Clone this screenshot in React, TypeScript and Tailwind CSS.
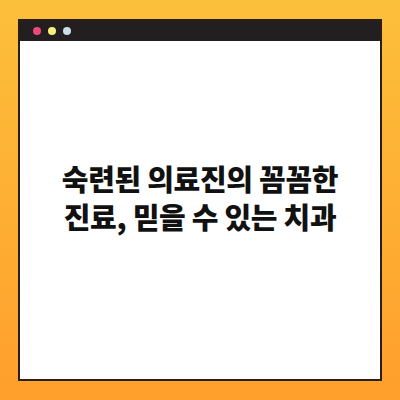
export default function App() {
  return (
    <div className="w-[400px] h-[400px] bg-gradient-to-b from-[#fcbf3b] to-[#ff9f2c] pt-[19px] pl-[18px]">
      <div className="w-[364px] h-[362px] border-2 border-[#2a1e1a] bg-white flex flex-col">
        <div className="h-[20px] bg-[#231f20] flex items-center gap-[7px] pl-[13px]">
          <span className="w-[8px] h-[8px] rounded-full bg-[#ea4a7c]" />
          <span className="w-[8px] h-[8px] rounded-full bg-[#f4f27c]" />
          <span className="w-[8px] h-[8px] rounded-full bg-[#c9e1e0]" />
        </div>
        <div className="flex-1 flex items-center justify-center pb-[27px]">
          <h1 className="flex flex-col items-center text-center text-[29px] leading-[38px] tracking-[-0.3px] font-black text-[#111] font-['Noto_Sans_CJK_KR',sans-serif]">
            <span>숙련된 의료진의 꼼꼼한</span>
            <span>진료, 믿을 수 있는 치과</span>
          </h1>
        </div>
      </div>
    </div>
  )
}
